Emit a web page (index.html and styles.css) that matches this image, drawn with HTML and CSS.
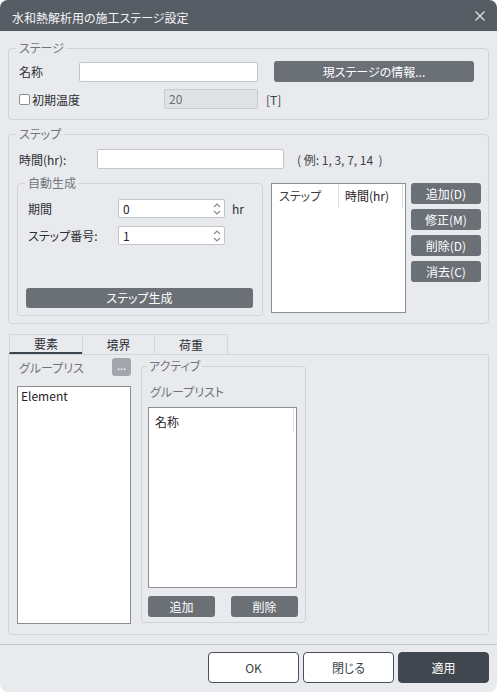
FILE: index.html
```html
<!DOCTYPE html>
<html lang="ja">
<head>
<meta charset="utf-8">
<title>水和熱解析用の施工ステージ設定</title>
<link rel="stylesheet" href="styles.css">
</head>
<body>
<div class="window">
  <div class="titlebar">
    <span class="title">水和熱解析用の施工ステージ設定</span>
    <svg class="close" width="10" height="10" viewBox="0 0 10 10"><path d="M0.5 0.5L9.5 9.5M9.5 0.5L0.5 9.5" stroke="#e6e7e9" stroke-width="1.1" fill="none"/></svg>
  </div>

  <fieldset class="group stage">
    <legend>ステージ</legend>
    <div class="row r1">
      <span class="lbl-name">名称</span>
      <div class="input name-input"></div>
      <div class="btn info-btn">現ステージの情報...</div>
    </div>
    <div class="row r2">
      <div class="check-wrap"><span class="checkbox"></span><span>初期温度</span></div>
      <div class="input temp-input">20</div>
      <span class="unit-t">[T]</span>
    </div>
  </fieldset>

  <fieldset class="group step">
    <legend>ステップ</legend>
    <div class="row time-row">
      <span class="time-lbl">時間(hr):</span>
      <div class="input time-input"></div>
      <span class="example">( 例: 1, 3, 7, 14&nbsp; )</span>
    </div>
    <div class="step-row2">
      <fieldset class="group auto">
        <legend>自動生成</legend>
        <div class="auto-body">
          <div class="row field-row">
            <span class="field-lbl">期間</span>
            <div class="input spin-input"><span>0</span>
              <svg width="8" height="14" viewBox="0 0 8 14"><path d="M1 5L4 2L7 5M1 9L4 12L7 9" stroke="#8a8e93" stroke-width="1.2" fill="none"/></svg>
            </div>
            <span class="hr">hr</span>
          </div>
          <div class="row field-row r-gap">
            <span class="field-lbl">ステップ番号:</span>
            <div class="input spin-input"><span>1</span>
              <svg width="8" height="14" viewBox="0 0 8 14"><path d="M1 5L4 2L7 5M1 9L4 12L7 9" stroke="#8a8e93" stroke-width="1.2" fill="none"/></svg>
            </div>
          </div>
          <div class="btn gen-btn">ステップ生成</div>
        </div>
      </fieldset>
      <div class="listbox step-list">
        <div class="lb-head">
          <span class="col c1">ステップ</span>
          <span class="col c2">時間(hr)</span>
        </div>
      </div>
      <div class="side-btns">
        <div class="btn sbtn">追加(D)</div>
        <div class="btn sbtn">修正(M)</div>
        <div class="btn sbtn">削除(D)</div>
        <div class="btn sbtn">消去(C)</div>
      </div>
    </div>
  </fieldset>

  <div class="tabs">
    <div class="tab active">要素</div>
    <div class="tab">境界</div>
    <div class="tab">荷重</div>
  </div>
  <div class="panel">
    <div class="left-col">
      <div class="gl-head">
        <span class="gl-label">グループリスト</span>
        <div class="dots">...</div>
      </div>
      <div class="listbox elem-list"><div class="elem-item">Element</div></div>
    </div>
    <fieldset class="group active-grp">
      <legend>アクティブ</legend>
      <div class="ag-label">グループリスト</div>
      <div class="listbox active-list">
        <div class="al-head"><span class="al-name">名称</span><span class="al-div"></span></div>
      </div>
      <div class="ag-btns">
        <div class="btn abtn">追加</div>
        <div class="btn abtn">削除</div>
      </div>
    </fieldset>
  </div>

  <div class="footer">
    <div class="fbtn">OK</div>
    <div class="fbtn">閉じる</div>
    <div class="fbtn primary">適用</div>
  </div>
</div>
</body>
</html>
```

FILE: styles.css
```css
* { box-sizing: border-box; }
html, body { margin: 0; padding: 0; background: #ffffff; }
body {
  font-family: "Noto Sans CJK JP", "Noto Sans", sans-serif;
  font-size: 12px;
  color: #2b2f34;
  font-feature-settings: "palt";
}
.window {
  width: 497px;
  height: 692px;
  background: #e9eaed;
  border-radius: 8px;
  overflow: hidden;
  display: flex;
  flex-direction: column;
}
.titlebar {
  height: 31px;
  flex: none;
  background: #575d64;
  color: #f4f5f6;
  display: flex;
  align-items: center;
  justify-content: space-between;
  padding: 0 12px;
  font-size: 12px;
}
.title { padding-top: 4px; line-height: 16px; }
.close { display: block; }

.group {
  margin: 0;
  border: 1px solid #cfd2d6;
  border-radius: 4px;
  min-width: 0;
}
legend {
  padding: 0 3px;
  margin-left: -3px;
  line-height: 16px;
  color: #70757c;
  font-size: 12px;
}
.row { display: flex; align-items: center; }
.input {
  height: 20px;
  background: #ffffff;
  border: 1px solid #c2c5c9;
  border-radius: 2px;
  padding: 0 4px;
  line-height: 18px;
  display: flex;
  align-items: center;
  justify-content: space-between;
  color: #1f2226;
}
.btn {
  background: #6b7077;
  color: #ffffff;
  border-radius: 3px;
  display: flex;
  align-items: center;
  justify-content: center;
  line-height: 14px;
}

/* stage */
.stage { margin: 9px 8px 0; padding: 5px 10px 10px; }
.r1 { height: 21px; }
.lbl-name { width: 60px; }
.name-input { width: 179px; }
.info-btn { width: 200px; height: 21px; margin-left: 16px; }
.r2 { height: 20px; margin-top: 7px; }
.check-wrap { width: 145px; display: flex; align-items: center; }
.checkbox {
  width: 11px; height: 11px;
  border: 1px solid #8a8e93;
  background: #ffffff;
  border-radius: 2px;
  margin-right: 2px;
}
.temp-input { width: 94px; background: #dfe1e4; border-color: #c8cbcf; color: #6b6f75; }
.unit-t { margin-left: 8px; color: #3a4048; }

/* step */
.step { margin: 6px 8px 0; padding: 7px 6px 7px 8px; }
.step > legend { margin-left: -1px; }
.time-row { height: 20px; margin-left: 2px; }
.time-lbl { width: 78px; }
.time-input { width: 187px; }
.example { margin-left: 13px; color: #3c434a; white-space: pre; }
.step-row2 { display: flex; align-items: flex-start; margin-top: 6px; }
.auto { width: 246px; padding: 8px 8px 7px 10px; }
.auto-body { display: flex; flex-direction: column; }
.field-row { height: 19px; }
.r-gap { margin-top: 8px; }
.field-lbl { width: 90px; }
.spin-input { width: 107px; height: 19px; padding-right: 3px; }
.spin-input svg { display: block; }
.hr { margin-left: 7px; }
.gen-btn { margin-top: 43px; height: 20px; margin-left: -2px; width: 227px; }

.listbox { background: #ffffff; border: 1px solid #8b8f94; }
.step-list { width: 135px; height: 130px; margin: 8px 0 0 8px; }
.lb-head { display: flex; }
.col { height: 24px; line-height: 24px; border-right: 1px solid #dfe0e3; color: #1f2226; }
.c1 { width: 67px; padding-left: 7px; color: #3a3f45; }
.c2 { width: 64px; padding-left: 6px; }
.side-btns { display: flex; flex-direction: column; gap: 5px; margin: 8px 0 0 5px; }
.sbtn { width: 70px; height: 21px; }

/* tabs */
.tabs { display: flex; margin-top: 10px; padding-left: 9px; }
.tab {
  width: 73px;
  height: 20px;
  border: 1px solid #d3d6da;
  border-bottom: none;
  text-align: center;
  line-height: 19px;
  margin-left: -1px;
  color: #2b2f34;
}
.tab:first-child { margin-left: 0; width: 74px; }
.tab:last-child { width: 74px; }
.tab.active { border-bottom: 2px solid #3e444b; line-height: 18px; }
.panel {
  margin: 0 8px;
  border: 1px solid #d3d6da;
  border-radius: 0 0 3px 3px;
  display: flex;
  align-items: flex-start;
  padding: 3px 8px 10px 8px;
}
.left-col { width: 114px; display: flex; flex-direction: column; }
.gl-head { display: flex; align-items: center; justify-content: space-between; height: 18px; }
.gl-label { width: 66px; overflow: hidden; white-space: nowrap; color: #70757c; margin-left: 2px; }
.dots {
  width: 19px; height: 18px;
  background: #a3a7ad;
  border-radius: 3px;
  color: #ffffff;
  text-align: center;
  line-height: 14px;
  font-size: 11px;
}
.elem-list { margin-top: 10px; height: 238px; padding: 0 3px; }
.elem-item { line-height: 17px; color: #1f2226; }
.active-grp { margin-left: 10px; width: 165px; padding: 10px 6px 5px 6px; }
.active-grp > legend { margin-left: -1px; padding: 0 2px; }
.ag-label { margin-left: 2px; line-height: 16px; color: #70757c; }
.active-list { margin-top: 7px; width: 149px; height: 181px; }
.al-head { display: flex; justify-content: space-between; height: 27px; }
.al-name { line-height: 27px; padding-left: 6px; color: #1f2226; }
.al-div { width: 1px; height: 23px; margin: 1px 2px 0 0; background: #dfe0e3; }
.ag-btns { display: flex; justify-content: space-between; width: 150px; margin-top: 8px; }
.abtn { width: 67px; height: 21px; }

/* footer */
.footer {
  margin-top: 9px;
  border-top: 1px solid #c0c4c9;
  padding: 7px 8px 9px;
  display: flex;
  justify-content: flex-end;
  gap: 4px;
}
.fbtn {
  width: 91px;
  height: 31px;
  background: #ffffff;
  border: 1px solid #4b5057;
  border-radius: 4px;
  display: flex;
  align-items: center;
  justify-content: center;
  color: #3a3f45;
}
.fbtn.primary { background: #41474e; border-color: #41474e; color: #ffffff; }
```
